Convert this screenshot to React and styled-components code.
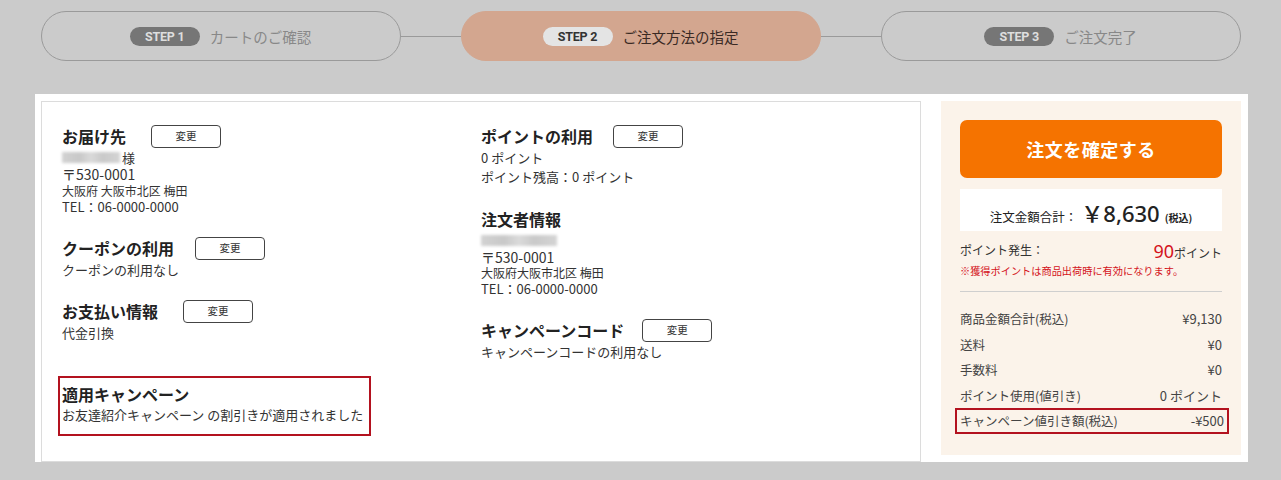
import React from "react";
import styled, { createGlobalStyle } from "styled-components";

const Global = createGlobalStyle`
  html, body { margin: 0; padding: 0; }
  body {
    background: #cbcbcb;
    font-family: "Noto Sans CJK JP", "Noto Sans", sans-serif;
    color: #333;
    width: 1281px;
    height: 480px;
    overflow: hidden;
  }
  * { box-sizing: border-box; }
`;

const Page = styled.div`
  display: flex;
  flex-direction: column;
`;

const Steps = styled.div`
  display: flex;
  align-items: center;
  justify-content: center;
  padding-top: 11px;
`;

const Step = styled.div`
  width: 360px;
  height: 50px;
  border-radius: 25px;
  border: 1px solid ${(p) => (p.$active ? "#d3a68f" : "#9a9a9a")};
  background: ${(p) => (p.$active ? "#d3a68f" : "transparent")};
  display: flex;
  align-items: center;
  justify-content: center;
  gap: 10px;
`;

const Badge = styled.span`
  display: inline-flex;
  align-items: center;
  justify-content: center;
  width: 70px;
  height: 19px;
  border-radius: 10px;
  background: ${(p) => (p.$active ? "#e4e4e4" : "#767676")};
  color: ${(p) => (p.$active ? "#333" : "#dedede")};
  font-family: Roboto, "Liberation Sans", sans-serif;
  font-weight: 700;
  font-size: 12.5px;
  letter-spacing: -0.2px;
`;

const StepLabel = styled.span`
  font-size: 14.5px;
  color: ${(p) => (p.$active ? "#3a2a24" : "#888")};
  font-weight: 400;
`;

const Connector = styled.div`
  width: 60px;
  height: 1px;
  background: #9a9a9a;
`;

const Panel = styled.div`
  margin: 33px 0 0 35px;
  width: 1213px;
  height: 368px;
  background: #fff;
  padding: 7px 7px 0 6px;
  display: flex;
  gap: 20px;
  align-items: flex-start;
`;

const Card = styled.div`
  width: 880px;
  height: 361px;
  border: 1px solid #dcdcdc;
  padding: 21px 0 0 20px;
  display: grid;
  grid-template-columns: 419px 1fr;
`;

const Column = styled.div`
  display: flex;
  flex-direction: column;
  gap: 20px;
`;

const Section = styled.div`
  display: flex;
  flex-direction: column;
`;

const Head = styled.div`
  display: flex;
  align-items: center;
  height: 26px;
  gap: ${(p) => p.$gap || 22}px;
`;

const Title = styled.h3`
  margin: 0;
  font-size: 16px;
  font-weight: 700;
  color: #222;
  line-height: 24px;
`;

const ChangeBtn = styled.button`
  width: 70px;
  height: 23px;
  border: 1px solid #444;
  border-radius: 4px;
  background: #fff;
  font-family: "Noto Sans CJK JP", sans-serif;
  font-size: 10.5px;
  color: #333;
  padding: 0;
  line-height: 1;
`;

const Line = styled.div`
  font-size: ${(p) => p.$size || 13}px;
  line-height: ${(p) => p.$lh || 16.5}px;
  height: ${(p) => p.$lh || 16.5}px;
  color: #333;
  display: flex;
  align-items: center;
  gap: 2px;
  white-space: nowrap;
`;

const Blur = styled.span`
  display: inline-block;
  width: ${(p) => p.$w || 58}px;
  height: 11px;
  background: linear-gradient(90deg, #d2d2d2, #c8c8c8 30%, #dadada 50%, #c9c9c9 70%, #d4d4d4);
  filter: blur(1.5px);
`;

const Notice = styled.div`
  margin-top: 35px;
  width: 313px;
  margin-left: -4px;
  height: 60px;
  border: 2px solid #b3121f;
  padding: 4px 0 0 2px;
  display: flex;
  flex-direction: column;
`;

const Side = styled.div`
  width: 300px;
  height: 354px;
  background: #fbf3ea;
  padding: 19px 19px 0 19px;
  display: flex;
  flex-direction: column;
`;

const ConfirmBtn = styled.button`
  width: 262px;
  height: 58px;
  border: none;
  border-radius: 7px;
  background: #f57300;
  color: #fff;
  font-family: "Noto Sans CJK JP", sans-serif;
  font-size: 18px;
  font-weight: 700;
  letter-spacing: 0.5px;
`;

const TotalBox = styled.div`
  margin-top: 11px;
  height: 42px;
  width: 262px;
  background: #fff;
  display: flex;
  align-items: baseline;
  justify-content: center;
  padding-top: 7px;
  color: #222;
`;

const TotalLabel = styled.span`
  font-size: 12.5px;
`;

const TotalValue = styled.span`
  font-size: 22px;
  font-weight: 500;
  margin-left: 4px;
  font-family: "Noto Sans", "Noto Sans CJK JP", sans-serif;
`;

const TaxNote = styled.span`
  font-size: 10px;
  font-weight: 700;
  margin-left: 5px;
`;

const PointRow = styled.div`
  margin-top: 10px;
  display: flex;
  justify-content: space-between;
  align-items: flex-end;
  height: 22px;
`;

const PointLabel = styled.span`
  font-size: 12px;
  color: #333;
  align-self: flex-start;
`;

const PointValue = styled.span`
  color: #d4121a;
  font-size: 18px;
  line-height: 20px;
  font-family: "Noto Sans", sans-serif;
  & small {
    font-size: 12px;
    color: #333;
    font-family: "Noto Sans CJK JP", sans-serif;
  }
`;

const RedNote = styled.div`
  color: #d4121a;
  font-size: 10.2px;
  margin-top: 1px;
  line-height: 14px;
`;

const Rule = styled.hr`
  border: none;
  border-top: 1px solid #cfcfcf;
  margin: 13px 0 14px;
  width: 262px;
`;

const SumRow = styled.div`
  display: flex;
  justify-content: space-between;
  align-items: center;
  height: 25.5px;
  font-size: 12.5px;
  color: #444;
  ${(p) =>
    p.$boxed &&
    `
    border: 2px solid #b3121f;
    margin: 0 -7px 0 -5px;
    padding: 0 3px 0 3px;
  `}
`;

const Amount = styled.span`
  font-size: 13px;
  color: #444;
`;

const steps = [
  { n: 1, label: "カートのご確認" },
  { n: 2, label: "ご注文方法の指定", active: true },
  { n: 3, label: "ご注文完了" },
];

const sums = [
  ["商品金額合計(税込)", "¥9,130"],
  ["送料", "¥0"],
  ["手数料", "¥0"],
  ["ポイント使用(値引き)", "0 ポイント"],
  ["キャンペーン値引き額(税込)", "-¥500", true],
];

export default function App() {
  return (
    <Page>
      <Global />
      <Steps>
        {steps.map((s, i) => (
          <React.Fragment key={s.n}>
            {i > 0 && <Connector />}
            <Step $active={s.active}>
              <Badge $active={s.active}>STEP {s.n}</Badge>
              <StepLabel $active={s.active}>{s.label}</StepLabel>
            </Step>
          </React.Fragment>
        ))}
      </Steps>
      <Panel>
        <Card>
          <Column>
            <Section>
              <Head $gap={25}>
                <Title>お届け先</Title>
                <ChangeBtn>変更</ChangeBtn>
              </Head>
              <Line $lh={17}>
                <Blur $w={58} />
                様
              </Line>
              <Line $size={14} $lh={17}>〒530-0001</Line>
              <Line $size={12} $lh={16}>大阪府 大阪市北区 梅田</Line>
              <Line $size={13} $lh={16}>TEL：06-0000-0000</Line>
            </Section>
            <Section>
              <Head $gap={21}>
                <Title>クーポンの利用</Title>
                <ChangeBtn>変更</ChangeBtn>
              </Head>
              <Line $lh={17}>クーポンの利用なし</Line>
            </Section>
            <Section>
              <Head $gap={25}>
                <Title>お支払い情報</Title>
                <ChangeBtn>変更</ChangeBtn>
              </Head>
              <Line $lh={17}>代金引換</Line>
              <Notice>
                <Title>適用キャンペーン</Title>
                <Line $lh={18}>お友達紹介キャンペーン の割引きが適用されました</Line>
              </Notice>
            </Section>
          </Column>
          <Column>
            <Section>
              <Head $gap={20}>
                <Title>ポイントの利用</Title>
                <ChangeBtn>変更</ChangeBtn>
              </Head>
              <Line $lh={18}>0 ポイント</Line>
              <Line $lh={19}>ポイント残高：0 ポイント</Line>
            </Section>
            <Section>
              <Head>
                <Title>注文者情報</Title>
              </Head>
              <Line $lh={17}>
                <Blur $w={76} />
              </Line>
              <Line $size={14} $lh={16}>〒530-0001</Line>
              <Line $size={12} $lh={16}>大阪府大阪市北区 梅田</Line>
              <Line $size={13} $lh={16}>TEL：06-0000-0000</Line>
            </Section>
            <Section>
              <Head $gap={18}>
                <Title>キャンペーンコード</Title>
                <ChangeBtn>変更</ChangeBtn>
              </Head>
              <Line $lh={17}>キャンペーンコードの利用なし</Line>
            </Section>
          </Column>
        </Card>
        <Side>
          <ConfirmBtn>注文を確定する</ConfirmBtn>
          <TotalBox>
            <TotalLabel>注文金額合計：</TotalLabel>
            <TotalValue>￥8,630</TotalValue>
            <TaxNote>(税込)</TaxNote>
          </TotalBox>
          <PointRow>
            <PointLabel>ポイント発生：</PointLabel>
            <PointValue>
              90<small>ポイント</small>
            </PointValue>
          </PointRow>
          <RedNote>※獲得ポイントは商品出荷時に有効になります。</RedNote>
          <Rule />
          {sums.map(([k, v, boxed]) => (
            <SumRow key={k} $boxed={boxed}>
              <span>{k}</span>
              <Amount>{v}</Amount>
            </SumRow>
          ))}
        </Side>
      </Panel>
    </Page>
  );
}
